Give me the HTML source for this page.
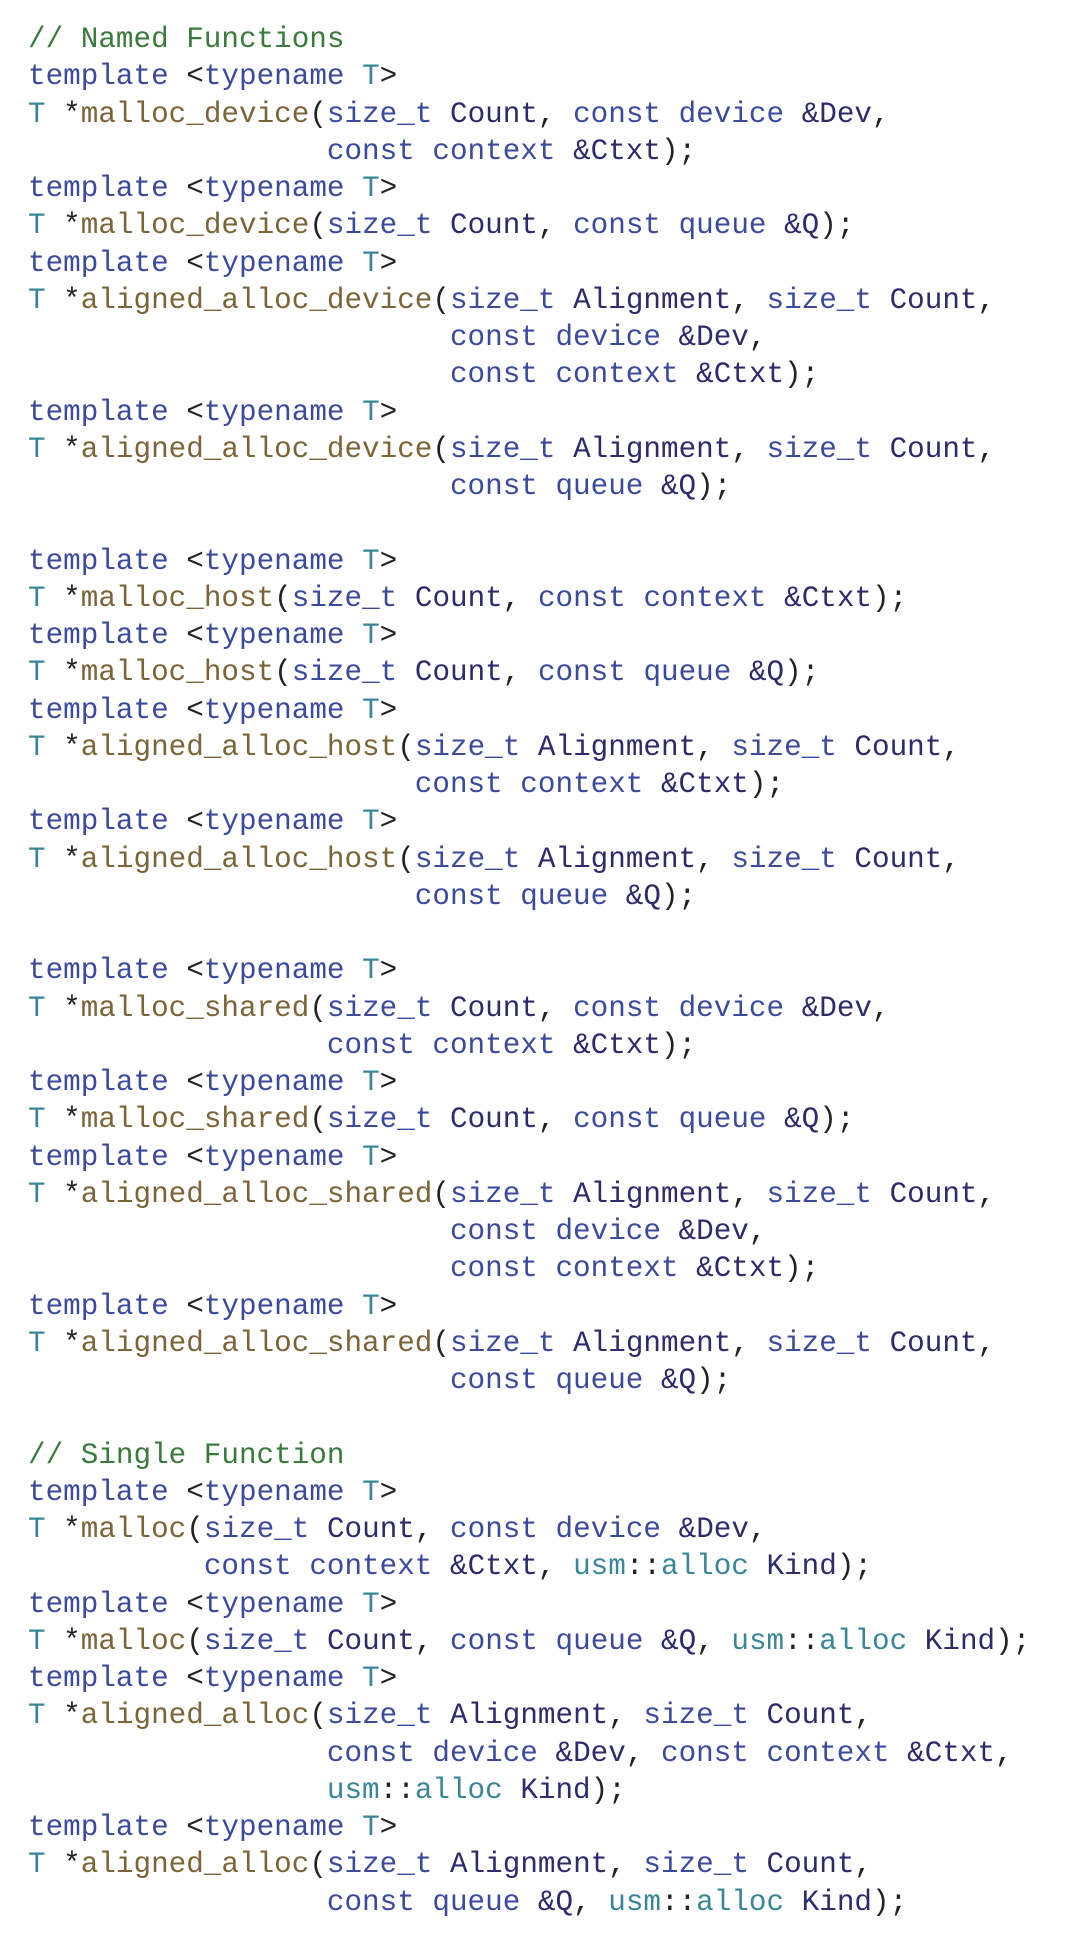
<!DOCTYPE html>
<html><head><meta charset="utf-8"><style>
html,body{margin:0;padding:0;background:#fff;width:1074px;height:1948px;overflow:hidden}
pre{margin:0;position:absolute;left:28px;top:21px;font-family:"Liberation Mono","DejaVu Sans Mono",monospace;font-size:29.3px;line-height:37.25px;color:#222}
.k{color:#3b4a9c}.v{color:#2e2b6b}.t{color:#3a8597}.f{color:#7b6538}.c{color:#3a7a3c}
</style></head><body>
<pre><span class="c">// Named Functions</span>
<span class="k">template</span> &lt;<span class="k">typename</span> <span class="t">T</span>&gt;
<span class="t">T</span> *<span class="f">malloc_device</span>(<span class="k">size_t</span> <span class="v">Count</span>, <span class="k">const</span> <span class="k">device</span> <span class="v">&amp;Dev</span>,
                 <span class="k">const</span> <span class="k">context</span> <span class="v">&amp;Ctxt</span>);
<span class="k">template</span> &lt;<span class="k">typename</span> <span class="t">T</span>&gt;
<span class="t">T</span> *<span class="f">malloc_device</span>(<span class="k">size_t</span> <span class="v">Count</span>, <span class="k">const</span> <span class="k">queue</span> <span class="v">&amp;Q</span>);
<span class="k">template</span> &lt;<span class="k">typename</span> <span class="t">T</span>&gt;
<span class="t">T</span> *<span class="f">aligned_alloc_device</span>(<span class="k">size_t</span> <span class="v">Alignment</span>, <span class="k">size_t</span> <span class="v">Count</span>,
                        <span class="k">const</span> <span class="k">device</span> <span class="v">&amp;Dev</span>,
                        <span class="k">const</span> <span class="k">context</span> <span class="v">&amp;Ctxt</span>);
<span class="k">template</span> &lt;<span class="k">typename</span> <span class="t">T</span>&gt;
<span class="t">T</span> *<span class="f">aligned_alloc_device</span>(<span class="k">size_t</span> <span class="v">Alignment</span>, <span class="k">size_t</span> <span class="v">Count</span>,
                        <span class="k">const</span> <span class="k">queue</span> <span class="v">&amp;Q</span>);

<span class="k">template</span> &lt;<span class="k">typename</span> <span class="t">T</span>&gt;
<span class="t">T</span> *<span class="f">malloc_host</span>(<span class="k">size_t</span> <span class="v">Count</span>, <span class="k">const</span> <span class="k">context</span> <span class="v">&amp;Ctxt</span>);
<span class="k">template</span> &lt;<span class="k">typename</span> <span class="t">T</span>&gt;
<span class="t">T</span> *<span class="f">malloc_host</span>(<span class="k">size_t</span> <span class="v">Count</span>, <span class="k">const</span> <span class="k">queue</span> <span class="v">&amp;Q</span>);
<span class="k">template</span> &lt;<span class="k">typename</span> <span class="t">T</span>&gt;
<span class="t">T</span> *<span class="f">aligned_alloc_host</span>(<span class="k">size_t</span> <span class="v">Alignment</span>, <span class="k">size_t</span> <span class="v">Count</span>,
                      <span class="k">const</span> <span class="k">context</span> <span class="v">&amp;Ctxt</span>);
<span class="k">template</span> &lt;<span class="k">typename</span> <span class="t">T</span>&gt;
<span class="t">T</span> *<span class="f">aligned_alloc_host</span>(<span class="k">size_t</span> <span class="v">Alignment</span>, <span class="k">size_t</span> <span class="v">Count</span>,
                      <span class="k">const</span> <span class="k">queue</span> <span class="v">&amp;Q</span>);

<span class="k">template</span> &lt;<span class="k">typename</span> <span class="t">T</span>&gt;
<span class="t">T</span> *<span class="f">malloc_shared</span>(<span class="k">size_t</span> <span class="v">Count</span>, <span class="k">const</span> <span class="k">device</span> <span class="v">&amp;Dev</span>,
                 <span class="k">const</span> <span class="k">context</span> <span class="v">&amp;Ctxt</span>);
<span class="k">template</span> &lt;<span class="k">typename</span> <span class="t">T</span>&gt;
<span class="t">T</span> *<span class="f">malloc_shared</span>(<span class="k">size_t</span> <span class="v">Count</span>, <span class="k">const</span> <span class="k">queue</span> <span class="v">&amp;Q</span>);
<span class="k">template</span> &lt;<span class="k">typename</span> <span class="t">T</span>&gt;
<span class="t">T</span> *<span class="f">aligned_alloc_shared</span>(<span class="k">size_t</span> <span class="v">Alignment</span>, <span class="k">size_t</span> <span class="v">Count</span>,
                        <span class="k">const</span> <span class="k">device</span> <span class="v">&amp;Dev</span>,
                        <span class="k">const</span> <span class="k">context</span> <span class="v">&amp;Ctxt</span>);
<span class="k">template</span> &lt;<span class="k">typename</span> <span class="t">T</span>&gt;
<span class="t">T</span> *<span class="f">aligned_alloc_shared</span>(<span class="k">size_t</span> <span class="v">Alignment</span>, <span class="k">size_t</span> <span class="v">Count</span>,
                        <span class="k">const</span> <span class="k">queue</span> <span class="v">&amp;Q</span>);

<span class="c">// Single Function</span>
<span class="k">template</span> &lt;<span class="k">typename</span> <span class="t">T</span>&gt;
<span class="t">T</span> *<span class="f">malloc</span>(<span class="k">size_t</span> <span class="v">Count</span>, <span class="k">const</span> <span class="k">device</span> <span class="v">&amp;Dev</span>,
          <span class="k">const</span> <span class="k">context</span> <span class="v">&amp;Ctxt</span>, <span class="t">usm</span>::<span class="t">alloc</span> <span class="v">Kind</span>);
<span class="k">template</span> &lt;<span class="k">typename</span> <span class="t">T</span>&gt;
<span class="t">T</span> *<span class="f">malloc</span>(<span class="k">size_t</span> <span class="v">Count</span>, <span class="k">const</span> <span class="k">queue</span> <span class="v">&amp;Q</span>, <span class="t">usm</span>::<span class="t">alloc</span> <span class="v">Kind</span>);
<span class="k">template</span> &lt;<span class="k">typename</span> <span class="t">T</span>&gt;
<span class="t">T</span> *<span class="f">aligned_alloc</span>(<span class="k">size_t</span> <span class="v">Alignment</span>, <span class="k">size_t</span> <span class="v">Count</span>,
                 <span class="k">const</span> <span class="k">device</span> <span class="v">&amp;Dev</span>, <span class="k">const</span> <span class="k">context</span> <span class="v">&amp;Ctxt</span>,
                 <span class="t">usm</span>::<span class="t">alloc</span> <span class="v">Kind</span>);
<span class="k">template</span> &lt;<span class="k">typename</span> <span class="t">T</span>&gt;
<span class="t">T</span> *<span class="f">aligned_alloc</span>(<span class="k">size_t</span> <span class="v">Alignment</span>, <span class="k">size_t</span> <span class="v">Count</span>,
                 <span class="k">const</span> <span class="k">queue</span> <span class="v">&amp;Q</span>, <span class="t">usm</span>::<span class="t">alloc</span> <span class="v">Kind</span>);</pre>
</body></html>
